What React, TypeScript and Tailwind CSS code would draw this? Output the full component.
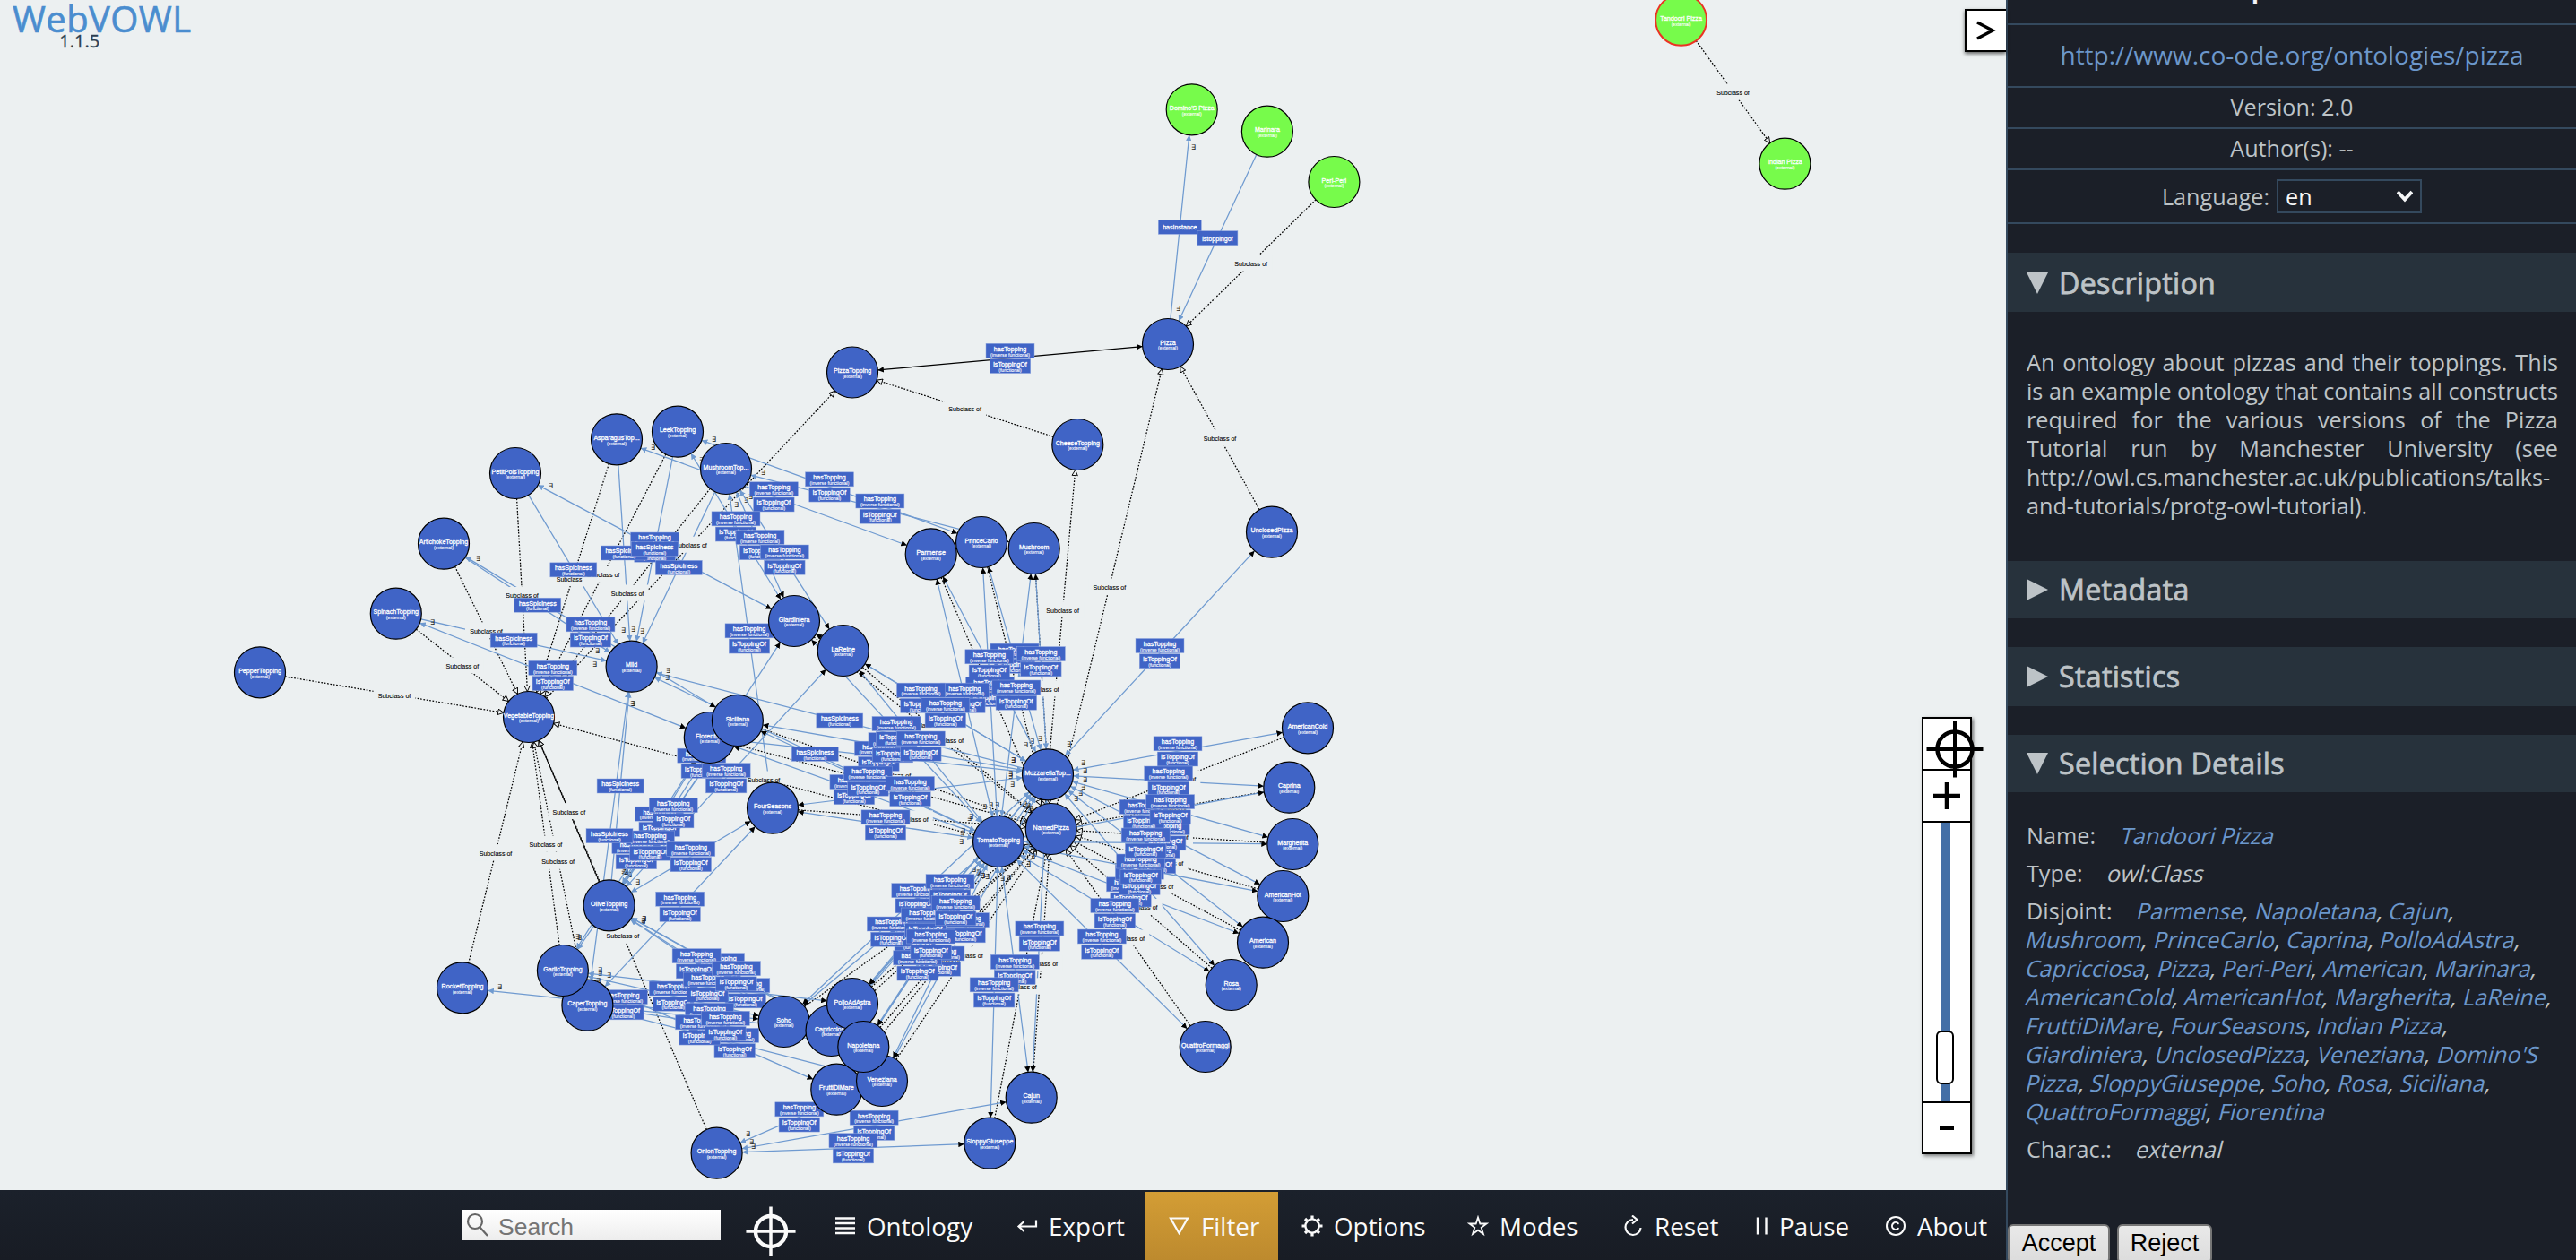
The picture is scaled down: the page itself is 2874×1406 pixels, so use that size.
import React from 'react';
import { Copyright } from 'lucide-react';

type Node = { name: string; x: number; y: number; kind?: 'green' | 'selected' };

// Listed in paint order, later nodes lie on top
const nodes: Record<string, Node> = {
  asparagus: { name: 'AsparagusTop...', x: 688, y: 490.3 },
  leek: { name: 'LeekTopping', x: 756, y: 481.7 },
  mushroomTop: { name: 'MushroomTop...', x: 810, y: 523 },
  petitPois: { name: 'PetitPoisTopping', x: 575, y: 528 },
  artichoke: { name: 'ArtichokeTopping', x: 495, y: 606.7 },
  spinach: { name: 'SpinachTopping', x: 441.8, y: 684.7 },
  pepper: { name: 'PepperTopping', x: 290, y: 750.3 },
  vegetable: { name: 'VegetableTopping', x: 590, y: 800 },
  mild: { name: 'Mild', x: 704.6, y: 743.7 },
  giardiniera: { name: 'Giardiniera', x: 886, y: 693 },
  laReine: { name: 'LaReine', x: 940.7, y: 726 },
  fiorentina: { name: 'Fiorentina', x: 791.8, y: 823 },
  siciliana: { name: 'Siciliana', x: 822.9, y: 804 },
  parmense: { name: 'Parmense', x: 1038.7, y: 618.3 },
  princeCarlo: { name: 'PrinceCarlo', x: 1095, y: 605 },
  mushroom: { name: 'Mushroom', x: 1153.7, y: 612 },
  cheese: { name: 'CheeseTopping', x: 1202.3, y: 496 },
  pizza: { name: 'Pizza', x: 1303, y: 384 },
  pizzaTopping: { name: 'PizzaTopping', x: 951, y: 415.5 },
  unclosed: { name: 'UnclosedPizza', x: 1419, y: 593.7 },
  americanCold: { name: 'AmericanCold', x: 1459, y: 812.3 },
  mozzarella: { name: 'MozzarellaTop...', x: 1169, y: 864.3 },
  tomato: { name: 'TomatoTopping', x: 1114, y: 939 },
  named: { name: 'NamedPizza', x: 1172.7, y: 925 },
  caprina: { name: 'Caprina', x: 1438.3, y: 878.7 },
  margherita: { name: 'Margherita', x: 1442.3, y: 942 },
  americanHot: { name: 'AmericanHot', x: 1431.3, y: 1000 },
  american: { name: 'American', x: 1409, y: 1051.7 },
  rosa: { name: 'Rosa', x: 1373.7, y: 1099 },
  quattro: { name: 'QuattroFormaggi', x: 1344.7, y: 1168 },
  fourSeasons: { name: 'FourSeasons', x: 862, y: 901.7 },
  olive: { name: 'OliveTopping', x: 679.6, y: 1010.3 },
  caper: { name: 'CaperTopping', x: 655.4, y: 1121.7 },
  garlic: { name: 'GarlicTopping', x: 627.9, y: 1083 },
  rocket: { name: 'RocketTopping', x: 516, y: 1102.3 },
  onion: { name: 'OnionTopping', x: 799.6, y: 1286.7 },
  soho: { name: 'Soho', x: 874.6, y: 1140 },
  capricciosa: { name: 'Capricciosa', x: 927.5, y: 1150 },
  pollo: { name: 'PolloAdAstra', x: 951, y: 1120 },
  frutti: { name: 'FruttiDiMare', x: 933.3, y: 1215.7 },
  veneziana: { name: 'Veneziana', x: 984, y: 1206 },
  napoletana: { name: 'Napoletana', x: 963.3, y: 1168 },
  cajun: { name: 'Cajun', x: 1150.7, y: 1224.7 },
  sloppy: { name: 'SloppyGiuseppe', x: 1104.3, y: 1275.7 },
  domino: { name: "Domino'S Pizza", x: 1329.7, y: 122.3, kind: 'green' },
  marinara: { name: 'Marinara', x: 1413.9, y: 146.7, kind: 'green' },
  periPeri: { name: 'Peri-Peri', x: 1488.4, y: 203, kind: 'green' },
  indian: { name: 'Indian Pizza', x: 1991.4, y: 182.7, kind: 'green' },
  tandoori: { name: 'Tandoori Pizza', x: 1875.6, y: 22.3, kind: 'selected' },
};

// [child, parent]
const subclasses: [string, string][] = [
  ['pepper', 'vegetable'], ['spinach', 'vegetable'], ['artichoke', 'vegetable'],
  ['petitPois', 'vegetable'], ['asparagus', 'vegetable'], ['leek', 'vegetable'],
  ['mushroomTop', 'vegetable'], ['rocket', 'vegetable'], ['garlic', 'vegetable'],
  ['caper', 'vegetable'], ['olive', 'vegetable'], ['onion', 'vegetable'],
  ['tomato', 'vegetable'], ['vegetable', 'pizzaTopping'], ['cheese', 'pizzaTopping'],
  ['mozzarella', 'cheese'], ['named', 'pizza'], ['unclosed', 'pizza'], ['periPeri', 'pizza'],
  ['tandoori', 'indian'],
  ['parmense', 'named'], ['princeCarlo', 'named'], ['mushroom', 'named'], ['laReine', 'named'],
  ['giardiniera', 'named'], ['siciliana', 'named'], ['fiorentina', 'named'], ['fourSeasons', 'named'],
  ['americanCold', 'named'], ['caprina', 'named'], ['margherita', 'named'], ['americanHot', 'named'],
  ['american', 'named'], ['rosa', 'named'], ['quattro', 'named'], ['cajun', 'named'],
  ['sloppy', 'named'], ['veneziana', 'named'], ['napoletana', 'named'], ['pollo', 'named'],
  ['capricciosa', 'named'], ['soho', 'named'], ['frutti', 'named'],
];

// [topping, pizza], later pairs lie on top
const toppings: [string, string][] = [
  ['asparagus', 'parmense'], ['leek', 'princeCarlo'], ['mushroomTop', 'mushroom'],
  ['leek', 'giardiniera'], ['mushroomTop', 'giardiniera'], ['mushroomTop', 'laReine'],
  ['petitPois', 'giardiniera'], ['artichoke', 'siciliana'], ['spinach', 'fiorentina'],
  ['mushroomTop', 'fourSeasons'],
  ['mozzarella', 'unclosed'], ['mozzarella', 'princeCarlo'], ['mozzarella', 'parmense'],
  ['mozzarella', 'mushroom'], ['tomato', 'princeCarlo'], ['tomato', 'mushroom'],
  ['tomato', 'parmense'], ['mozzarella', 'giardiniera'], ['mozzarella', 'laReine'],
  ['mozzarella', 'fiorentina'], ['mozzarella', 'siciliana'], ['tomato', 'giardiniera'],
  ['tomato', 'laReine'], ['tomato', 'fiorentina'], ['tomato', 'siciliana'],
  ['mozzarella', 'fourSeasons'], ['tomato', 'fourSeasons'],
  ['mozzarella', 'americanCold'], ['mozzarella', 'caprina'], ['mozzarella', 'american'],
  ['tomato', 'american'], ['mozzarella', 'americanHot'], ['tomato', 'caprina'],
  ['mozzarella', 'rosa'], ['tomato', 'americanHot'], ['mozzarella', 'margherita'],
  ['tomato', 'margherita'], ['tomato', 'rosa'], ['tomato', 'quattro'],
  ['mozzarella', 'cajun'], ['tomato', 'cajun'], ['tomato', 'sloppy'],
  ['mozzarella', 'capricciosa'], ['tomato', 'capricciosa'], ['mozzarella', 'soho'],
  ['tomato', 'soho'], ['mozzarella', 'veneziana'], ['tomato', 'veneziana'],
  ['mozzarella', 'pollo'], ['tomato', 'pollo'], ['tomato', 'frutti'],
  ['mozzarella', 'napoletana'], ['tomato', 'napoletana'],
  ['olive', 'giardiniera'], ['olive', 'laReine'], ['olive', 'fiorentina'], ['olive', 'siciliana'],
  ['garlic', 'fiorentina'], ['garlic', 'siciliana'], ['olive', 'fourSeasons'], ['caper', 'fourSeasons'],
  ['rocket', 'soho'], ['olive', 'capricciosa'], ['olive', 'veneziana'], ['olive', 'soho'],
  ['garlic', 'soho'], ['garlic', 'pollo'], ['olive', 'napoletana'], ['caper', 'veneziana'],
  ['caper', 'capricciosa'], ['garlic', 'frutti'], ['caper', 'napoletana'],
  ['onion', 'veneziana'], ['onion', 'cajun'], ['onion', 'sloppy'],
];

const spiciness = [
  'petitPois', 'artichoke', 'spinach', 'asparagus', 'leek', 'mushroomTop', 'mozzarella', 'tomato', 'olive', 'caper',
];

const disjoint = [
  'Parmense', 'Napoletana', 'Cajun', 'Mushroom', 'PrinceCarlo', 'Caprina', 'PolloAdAstra', 'Capricciosa',
  'Pizza', 'Peri-Peri', 'American', 'Marinara', 'AmericanCold', 'AmericanHot', 'Margherita', 'LaReine',
  'FruttiDiMare', 'FourSeasons', 'Indian Pizza', 'Giardiniera', 'UnclosedPizza', 'Veneziana',
  "Domino'S Pizza", 'SloppyGiuseppe', 'Soho', 'Rosa', 'Siciliana', 'QuattroFormaggi', 'Fiorentina',
];

const R = 28.5;

const middle = (a: string, b: string) => ({
  x: (nodes[a].x + nodes[b].x) / 2,
  y: (nodes[a].y + nodes[b].y) / 2,
});

function Edge({ from, to, kind }: { from: string; to: string; kind: 'subclass' | 'pair' | 'property' | 'inverse' }) {
  const a = nodes[from];
  const b = nodes[to];
  const d = Math.hypot(b.x - a.x, b.y - a.y);
  const ux = (b.x - a.x) / d;
  const uy = (b.y - a.y) / d;
  const stroke = kind === 'subclass' || kind === 'inverse' ? '#000' : '#6f9ad0';
  // the quantifier stands beside the arrow head of the restricted end
  const end = kind === 'pair' ? { x: a.x, y: a.y, ux, uy } : { x: b.x, y: b.y, ux: -ux, uy: -uy };
  const quantified = kind === 'pair' || kind === 'property';
  return (
    <g>
      <line
        x1={a.x + ux * R}
        y1={a.y + uy * R}
        x2={b.x - ux * R}
        y2={b.y - uy * R}
        stroke={stroke}
        strokeWidth={1.25}
        strokeDasharray={kind === 'subclass' ? '1.7 1.7' : undefined}
        markerEnd={kind === 'subclass' ? 'url(#open)' : kind === 'property' ? 'url(#blue)' : 'url(#black)'}
        markerStart={kind === 'pair' ? 'url(#blue)' : kind === 'inverse' ? 'url(#black)' : undefined}
      />
      {quantified && (
        <text x={end.x + end.ux * 41 + end.uy * 6} y={end.y + end.uy * 41 - end.ux * 6 + 3} fontSize="7.5" fill="#222">
          ∃
        </text>
      )}
    </g>
  );
}

function Box({ x, y, w, label, note }: { x: number; y: number; w: number; label: string; note?: string }) {
  return (
    <g transform={`translate(${x} ${y})`}>
      <rect x={-w / 2} y={-8} width={w} height={16} fill="#4064c6" stroke="#8fa6de" strokeWidth={0.5} />
      <text y={note ? 0.4 : 2.8} fontSize="7.1" fill="#fff" stroke="#fff" strokeWidth="0.28">{label}</text>
      {note && <text y={6.3} fontSize="5.2" fill="#fff" stroke="#fff" strokeWidth="0.1">{note}</text>}
    </g>
  );
}

function ToppingLabel({ x, y }: { x: number; y: number }) {
  return (
    <g>
      <Box x={x} y={y - 8.5} w={54} label="hasTopping" note="(inverse functional)" />
      <Box x={x} y={y + 8.7} w={45.5} label="isToppingOf" note="(functional)" />
    </g>
  );
}

function Graph() {
  return (
    <svg width="2238" height="1328" className="block" fontFamily='"Liberation Sans", sans-serif' textAnchor="middle">
      <defs>
        <marker id="black" viewBox="0 -5 10 10" refX="10" markerWidth="6.5" markerHeight="6.5" markerUnits="userSpaceOnUse" orient="auto-start-reverse">
          <path d="M0,-5L10,0L0,5Z" fill="#000" />
        </marker>
        <marker id="blue" viewBox="0 -5 10 10" refX="10" markerWidth="6.5" markerHeight="6.5" markerUnits="userSpaceOnUse" orient="auto-start-reverse">
          <path d="M0,-5L10,0L0,5Z" fill="#6f9ad0" />
        </marker>
        <marker id="open" viewBox="-1 -6 12 12" refX="10" markerWidth="7.5" markerHeight="7.5" markerUnits="userSpaceOnUse" orient="auto">
          <path d="M0,-5L10,0L0,5Z" fill="#ecf0f1" stroke="#000" strokeWidth="1.5" />
        </marker>
      </defs>

      {subclasses.map(([a, b]) => <Edge key={a + b} from={a} to={b} kind="subclass" />)}
      <line x1="668.5" y1="984" x2="601" y2="826.5" stroke="#000" strokeWidth="0.8" />
      {spiciness.map((a) => <Edge key={a} from={a} to="mild" kind="property" />)}
      {toppings.map(([a, b]) => <Edge key={a + b} from={a} to={b} kind="pair" />)}
      <Edge from="pizzaTopping" to="pizza" kind="inverse" />
      <Edge from="pizza" to="domino" kind="property" />
      <Edge from="marinara" to="pizza" kind="property" />

      {subclasses.map(([a, b]) => {
        const m = middle(a, b);
        return (
          <g key={a + b} transform={`translate(${m.x} ${m.y})`}>
            <rect x="-23.5" y="-9" width="47" height="18" fill="#ecf0f1" />
            <text y="3.4" fontSize="7.1" fill="#000" stroke="#000" strokeWidth="0.1">Subclass of</text>
          </g>
        );
      })}
      {toppings.map(([a, b]) => <ToppingLabel key={a + b} {...middle(a, b)} />)}
      {spiciness.map((a) => <Box key={a} {...middle(a, 'mild')} w={52} label="hasSpiciness" note="(functional)" />)}
      <ToppingLabel x={1127} y={399.8} />
      <Box x={1316.3} y={253.3} w={48} label="hasInstance" />
      <Box x={1358.4} y={265.7} w={45} label="istoppingof" />

      {Object.entries(nodes).map(([id, n]) => (
        <g key={id} transform={`translate(${n.x} ${n.y})`}>
          <circle
            r={R}
            fill={n.kind ? '#77fb4b' : '#4064c6'}
            stroke={n.kind === 'selected' ? '#eb3323' : '#000'}
            strokeWidth={n.kind === 'selected' ? 2 : 1.2}
          />
          <text y="0.6" fontSize="7.1" fill="#fff" stroke="#fff" strokeWidth="0.28">{n.name}</text>
          <text y="6.3" fontSize="5.2" fill="#fff" stroke="#fff" strokeWidth="0.1">(external)</text>
        </g>
      ))}
    </svg>
  );
}

function Crosshair({ className, ring }: { className: string; ring: number }) {
  return (
    <svg viewBox="0 0 64 64" className={className} fill="none" stroke="currentColor" strokeWidth={ring}>
      <circle cx="32" cy="32" r="19.5" />
      <path d="M32 0.5V63.5M0.5 32H63.5" strokeWidth="4" />
    </svg>
  );
}

const icon = 'w-6 h-6 shrink-0';

const menu = [
  {
    label: 'Ontology', width: 'w-[203px]',
    icon: <svg viewBox="0 0 24 24" className={icon} stroke="currentColor" strokeWidth="2.4"><path d="M1 3.500h22M1 9h22M1 14.500h22M1 20h22" /></svg>,
  },
  {
    label: 'Export', width: 'w-[170px]',
    icon: <svg viewBox="0 0 24 24" className={icon} fill="none" stroke="currentColor" strokeWidth="2.2"><path d="M22 5.500v7H3M8.500 7L2.500 12.500L8.500 18" /></svg>,
  },
  {
    label: 'Filter', width: 'w-[148px]', active: true,
    icon: <svg viewBox="0 0 24 24" className={icon} fill="none" stroke="currentColor" strokeWidth="2.2"><path d="M2 3.500h19L11.500 20Z" /></svg>,
  },
  {
    label: 'Options', width: 'w-[185px]',
    icon: (
      <svg viewBox="0 0 24 24" className={icon} fill="none" stroke="currentColor">
        <circle cx="12" cy="12" r="7.600" strokeWidth="2.400" />
        <path d="M12 .5v3.500M12 20v3.500M.5 12h3.500M20 12h3.500M4 4l2.200 2.200M17.800 17.800L20 20M20 4l-2.200 2.200M6.200 17.800L4 20" strokeWidth="3.200" />
      </svg>
    ),
  },
  {
    label: 'Modes', width: 'w-[173px]',
    icon: <svg viewBox="0 0 24 24" className={icon} fill="none" stroke="currentColor" strokeWidth="1.8"><path d="M12 2.500l2.300 7h7.200l-5.800 4.300 2.200 7.200-5.900-4.300-5.900 4.300 2.200-7.200L2.500 9.500h7.200Z" /></svg>,
  },
  {
    label: 'Reset', width: 'w-[149px]',
    icon: <svg viewBox="0 0 24 24" className={icon} fill="none" stroke="currentColor" strokeWidth="2.2"><path d="M12 5a8.500 8.500 0 1 0 8.500 9M11 .5L16.500 5L11 9.500" /></svg>,
  },
  {
    label: 'Pause', width: 'w-[144px]',
    icon: <svg viewBox="0 0 14 24" className="w-3.5 h-6 shrink-0" stroke="currentColor" strokeWidth="2.4"><path d="M2 2.500v19M11.500 2.500v19" /></svg>,
  },
  { label: 'About', width: 'w-[156px]', icon: <Copyright className={icon} strokeWidth={2} /> },
];

function Toolbar() {
  return (
    <nav className="h-[78px] shrink-0 flex items-stretch pt-0.5 bg-gradient-to-b from-[#1b212b] to-[#181c24] text-[#fafafa]">
      <div className="flex items-center pl-[516px]">
        <div className="w-[288px] h-[34px] -mt-0.5 flex items-center bg-gradient-to-b from-white to-[#ededed] text-[#757575]">
          <svg viewBox="0 0 26 28" className="w-[26px] h-7 ml-1" fill="none" stroke="#666" strokeWidth="2.2">
            <circle cx="10" cy="10" r="8" />
            <path d="M15.500 16.500L24 26" />
          </svg>
          <span className="ml-2.5 mt-1 text-[26.5px] leading-8 font-['Liberation_Sans',sans-serif]">Search</span>
        </div>
        <Crosshair className="w-14 h-14 ml-7 mt-3" ring={5} />
      </div>
      <div className="flex items-stretch ml-[17px]">
        {menu.map((item) => (
          <button
            key={item.label}
            className={`${item.width} flex items-center gap-3 pl-[26px] text-[27.8px] leading-9 ${
              item.active ? 'bg-gradient-to-b from-[#d39d35] to-[#bd8a2e]' : ''
            }`}
          >
            {item.icon}
            <span>{item.label}</span>
          </button>
        ))}
      </div>
    </nav>
  );
}

function ZoomSlider() {
  return (
    <div className="absolute left-[2144px] top-[800px] w-14 h-[488px] flex flex-col items-center border-2 border-black bg-white shadow-[2px_2px_4px_rgba(0,0,0,0.5)]">
      <div className="relative w-full h-[58px] border-b-2 border-black">
        <Crosshair className="absolute left-[3px] top-[2px] w-16 h-16 text-black" ring={4.5} />
      </div>
      <div className="w-full h-[58px] flex items-center justify-center border-b-2 border-black">
        <svg viewBox="0 0 30 30" className="w-[30px] h-[30px]" stroke="#000" strokeWidth="4.5"><path d="M15 0V30M0 15H30" /></svg>
      </div>
      <div className="relative w-full flex-1 flex justify-center">
        <div className="w-2.5 h-full -ml-0.5 bg-[#446fa6]" />
        <div className="absolute left-[14px] top-[232px] w-5 h-[60px] rounded-md border-2 border-black bg-white" />
      </div>
      <div className="w-full h-[57px] flex items-center justify-center border-t-2 border-black">
        <div className="w-4 h-[5px] bg-black" />
      </div>
    </div>
  );
}

function Section({ title, open, className }: { title: string; open?: boolean; className: string }) {
  return (
    <h3 className={`flex items-center pl-[21px] bg-[#27323c] text-[32.2px] leading-none text-[#bdc3c7] ${className}`}>
      <svg viewBox="0 0 24 24" className="w-6 h-6 mr-3" fill="currentColor">
        {open ? <path d="M0 0H24L12 24Z" /> : <path d="M0 0L24 12L0 24Z" />}
      </svg>
      <span className="leading-10 tracking-[0.3px] [-webkit-text-stroke:0.8px_currentColor]">{title}</span>
    </h3>
  );
}

// Slants the upright face word by word, so that a long list still wraps
function Slanted({ text, link, tail = '' }: { text: string; link?: boolean; tail?: string }) {
  const words = text.split(' ');
  return (
    <>
      {words.map((word, i) => (
        <React.Fragment key={word}>
          <span className="inline-block -skew-x-[14deg]">
            <span className={link ? 'text-[#6c97cb]' : ''}>{word}</span>
            {i === words.length - 1 && tail}
          </span>{' '}
        </React.Fragment>
      ))}
    </>
  );
}

function Sidebar() {
  const row = 'flex items-center justify-center border-b-2 border-[#34495e]';
  return (
    <aside className="w-[636px] h-full shrink-0 flex flex-col border-l-2 border-[#34495e] bg-[#1b1f28] text-[25.2px] leading-8 text-[#bdc3c7] overflow-hidden">
      <div className={`${row} h-7 shrink-0 overflow-hidden`}>
        <h1 className="-mt-[66px] text-[39px] leading-[54px] text-[#f5f6f7] [-webkit-text-stroke:0.8px_currentColor]">pizza</h1>
      </div>
      <div className={`${row} h-[70px] shrink-0 pb-0.5 text-[28px] text-[#6c97cb]`}>http://www.co-ode.org/ontologies/pizza</div>
      <div className={`${row} h-[46px] shrink-0 pb-0.5`}>Version: 2.0</div>
      <div className={`${row} h-[46px] shrink-0 pb-0.5`}>Author(s): --</div>
      <div className={`${row} h-[60px] shrink-0 gap-2`}>
        <span>Language:</span>
        <span className="w-[162px] h-[38px] flex items-center justify-between px-2 border-2 border-[#34495e] text-[#f5f6f7]">
          en
          <svg viewBox="0 0 18 14" className="w-[18px] h-3.5" fill="none" stroke="currentColor" strokeWidth="4"><path d="M1 2L9 10.500L17 2" /></svg>
        </span>
      </div>

      <Section title="Description" open className="h-[66px] mt-8 pt-px shrink-0" />
      <p className="h-[278px] shrink-0 pt-10 pl-[21px] pr-5 text-justify">
        An ontology about pizzas and their toppings. This is an example ontology that contains all constructs
        required for the various versions of the Pizza Tutorial run by Manchester University (see
        http://owl.cs.manchester.ac.uk/publications/talks-and-tutorials/protg-owl-tutorial).
      </p>
      <Section title="Metadata" className="h-16 shrink-0" />
      <Section title="Statistics" className="h-[66px] mt-8 shrink-0" />
      <Section title="Selection Details" open className="h-16 mt-8 shrink-0" />

      <dl className="flex-1 pl-[21px] pr-4 pt-8">
        <div className="mb-2.5"><span className="mr-[22px]">Name:</span> <Slanted text="Tandoori Pizza" link /></div>
        <div className="mb-2.5"><span className="mr-[22px]">Type:</span> <Slanted text="owl:Class" /></div>
        <div className="mb-2.5">
          <span className="mr-[22px]">Disjoint:</span>{' '}
          {disjoint.map((name, i) => (
            <Slanted key={name} text={name} link tail={i < disjoint.length - 1 ? ',' : ''} />
          ))}
        </div>
        <div><span className="mr-[22px]">Charac.:</span> <Slanted text="external" /></div>
      </dl>

      <div className="h-10 shrink-0 flex gap-2 overflow-hidden text-[27px] text-black font-['Liberation_Sans',sans-serif]">
        <button className="w-[114px] h-11 pb-0.5 rounded-md border-2 border-[#767676] bg-gradient-to-b from-[#e9e9e9] to-[#dcdcdc]">Accept</button>
        <button className="w-[106px] h-11 pb-0.5 rounded-md border-2 border-[#767676] bg-gradient-to-b from-[#e9e9e9] to-[#dcdcdc]">Reject</button>
      </div>
    </aside>
  );
}

export default function App() {
  return (
    <div className="w-[2874px] h-[1406px] flex overflow-hidden bg-[#ecf0f1] font-['Open_Sans',sans-serif]">
      <main className="w-[2238px] h-full shrink-0 flex flex-col">
        <div className="relative flex-1">
          <Graph />
          <div className="absolute left-3.5 top-0 flex flex-col items-center">
            <span className="h-9 text-[40px] leading-[42px] tracking-[0.4px] text-[#4a8dcf] [-webkit-text-stroke:0.6px_currentColor]">WebVOWL</span>
            <span className="-ml-[50px] text-[20px] leading-[20px] text-[#2c3e50] [-webkit-text-stroke:0.3px_currentColor]">1.1.5</span>
          </div>
          <button className="absolute right-0 top-2.5 w-[46px] h-12 flex items-center justify-center border-2 border-r-0 border-black bg-white shadow-[0_2px_4px_rgba(0,0,0,0.6)]">
            <svg viewBox="0 0 22 22" className="w-[22px] h-[22px]" fill="none" stroke="#000" strokeWidth="3.500"><path d="M1 2L18 11L1 20" /></svg>
          </button>
          <ZoomSlider />
        </div>
        <Toolbar />
      </main>
      <Sidebar />
    </div>
  );
}
